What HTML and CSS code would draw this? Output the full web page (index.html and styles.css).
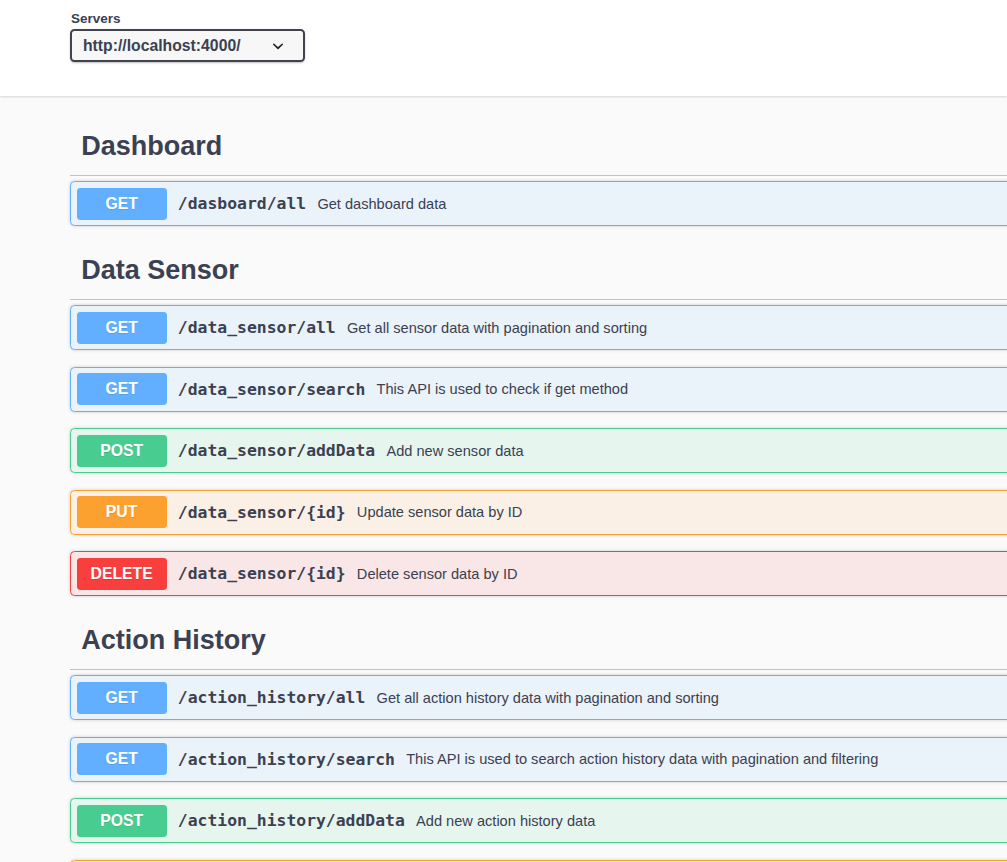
FILE: index.html
```html
<!DOCTYPE html>
<html lang="en">
<head>
<meta charset="utf-8">
<title>Swagger UI</title>
<link rel="stylesheet" href="styles.css">
</head>
<body>
<div class="scheme-container">
  <div class="wrapper">
    <div class="servers">
      <span class="servers-label">Servers</span>
      <div class="server-select">
        <span class="server-value">http://localhost:4000/</span>
        <svg class="chevron" viewBox="0 0 20 20" width="22" height="22" aria-hidden="true"><path d="M13.418 7.859a.695.695 0 01.978 0 .68.68 0 010 .969l-3.908 3.83a.697.697 0 01-.979 0l-3.908-3.83a.68.68 0 010-.969.695.695 0 01.978 0L10 11l3.418-3.141z" fill="#222"/></svg>
      </div>
    </div>
  </div>
</div>

<div class="wrapper main">
  <section class="tag-section">
    <h3 class="opblock-tag">Dashboard</h3>
    <div class="opblock get"><span class="method">GET</span><span class="path">/dasboard/all</span><span class="desc">Get dashboard data</span></div>
  </section>

  <section class="tag-section">
    <h3 class="opblock-tag">Data Sensor</h3>
    <div class="opblock get"><span class="method">GET</span><span class="path">/data_sensor/all</span><span class="desc">Get all sensor data with pagination and sorting</span></div>
    <div class="opblock get"><span class="method">GET</span><span class="path">/data_sensor/search</span><span class="desc">This API is used to check if get method</span></div>
    <div class="opblock post"><span class="method">POST</span><span class="path">/data_sensor/addData</span><span class="desc">Add new sensor data</span></div>
    <div class="opblock put"><span class="method">PUT</span><span class="path">/data_sensor/{id}</span><span class="desc">Update sensor data by ID</span></div>
    <div class="opblock delete"><span class="method">DELETE</span><span class="path">/data_sensor/{id}</span><span class="desc">Delete sensor data by ID</span></div>
  </section>

  <section class="tag-section">
    <h3 class="opblock-tag">Action History</h3>
    <div class="opblock get"><span class="method">GET</span><span class="path">/action_history/all</span><span class="desc">Get all action history data with pagination and sorting</span></div>
    <div class="opblock get"><span class="method">GET</span><span class="path">/action_history/search</span><span class="desc">This API is used to search action history data with pagination and filtering</span></div>
    <div class="opblock post"><span class="method">POST</span><span class="path">/action_history/addData</span><span class="desc">Add new action history data</span></div>
    <div class="opblock put"><span class="method">PUT</span><span class="path">/action_history/{id}</span><span class="desc">Update action history data by ID</span></div>
  </section>
</div>
</body>
</html>
```

FILE: styles.css
```css
html, body {
  margin: 0;
  padding: 0;
  overflow: hidden;
}

body {
  background: #fafafa;
  font-family: "Liberation Sans", Arial, sans-serif;
  color: #3b4151;
}

.wrapper {
  box-sizing: border-box;
  width: 1100px;
  padding: 0 0 0 70px;
}

.scheme-container {
  background: #fff;
  box-shadow: 0 1px 2px 0 rgba(0, 0, 0, 0.15);
  padding: 11px 0 34px;
  margin: 0 0 22.5px;
}

.servers {
  display: flex;
  flex-direction: column;
  align-items: flex-start;
}

.servers-label {
  font-size: 13.5px;
  font-weight: 700;
  line-height: 16px;
  margin: 0 0 2px 1px;
  color: #3b4151;
}

.server-select {
  box-sizing: border-box;
  width: 235px;
  height: 33px;
  border: 2px solid #41444e;
  border-radius: 4.5px;
  background: #f7f7f7;
  box-shadow: 0 1px 2px 0 rgba(0, 0, 0, 0.25);
  display: flex;
  align-items: center;
  justify-content: space-between;
  padding: 0 14px 0 11px;
}

.server-value {
  font-size: 15.75px;
  font-weight: 700;
  line-height: 18px;
  color: #3b4151;
}

.chevron {
  display: block;
}

.tag-section {
  display: flex;
  flex-direction: column;
}

.opblock-tag {
  box-sizing: border-box;
  height: 57px;
  margin: 0 0 5.5px;
  padding: 0 22px 0 11.25px;
  display: flex;
  align-items: center;
  font-size: 27px;
  font-weight: 700;
  color: #3b4151;
  border-bottom: 1px solid rgba(59, 65, 81, 0.3);
}

.opblock {
  box-sizing: border-box;
  height: 45px;
  margin: 0 0 16.5px;
  padding: 0 5.6px;
  display: flex;
  align-items: center;
  border: 1px solid;
  border-radius: 4.5px;
  box-shadow: 0 0 3.4px rgba(0, 0, 0, 0.19);
}

.method {
  box-sizing: border-box;
  min-width: 90px;
  height: 32px;
  line-height: 32px;
  text-align: center;
  font-size: 15.75px;
  font-weight: 700;
  color: #fff;
  border-radius: 3.4px;
  text-shadow: 0 1px 0 rgba(0, 0, 0, 0.1);
}

.path {
  padding: 0 11.25px;
  font-family: "DejaVu Sans Mono", "Liberation Mono", monospace;
  font-size: 16.4px;
  font-weight: 700;
  color: #3b4151;
  white-space: nowrap;
}

.desc {
  font-size: 14.6px;
  color: #3b4151;
  white-space: nowrap;
}

.get { border-color: #61affe; background: rgba(97, 175, 254, 0.1); }
.get .method { background: #61affe; }

.post { border-color: #49cc90; background: rgba(73, 204, 144, 0.1); }
.post .method { background: #49cc90; }

.put { border-color: #fca130; background: rgba(252, 161, 48, 0.1); }
.put .method { background: #fca130; }

.delete { border-color: #f93e3e; background: rgba(249, 62, 62, 0.1); }
.delete .method { background: #f93e3e; }
```
